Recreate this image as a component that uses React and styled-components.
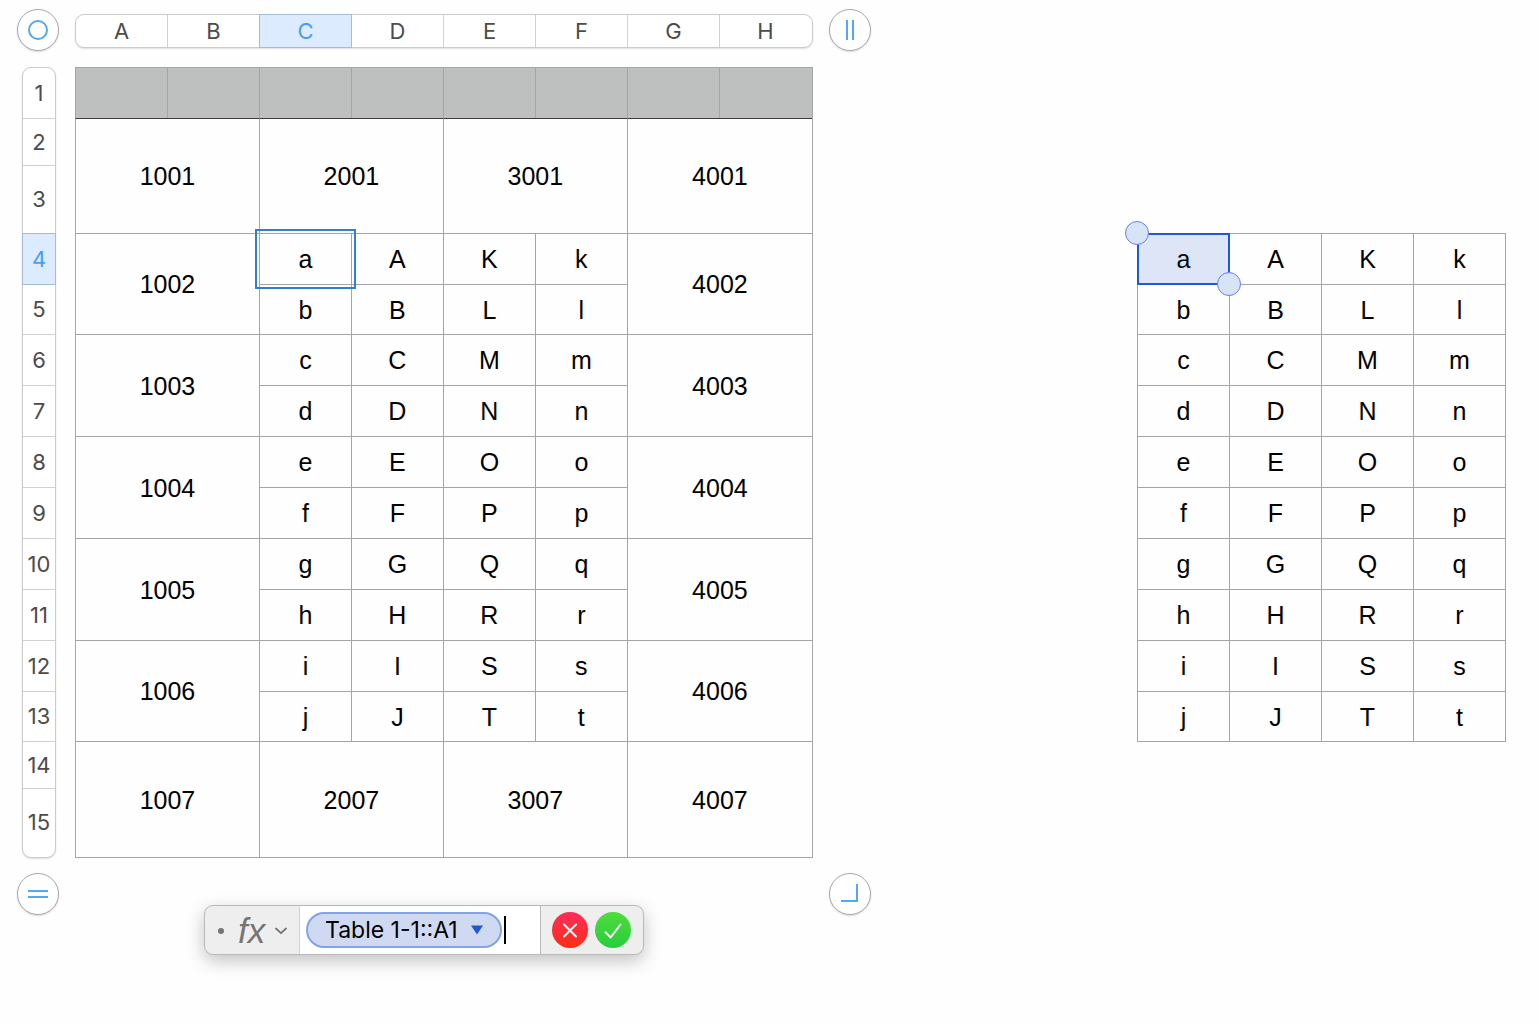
import React from 'react';
import styled, { createGlobalStyle, css } from 'styled-components';

const GlobalStyle = createGlobalStyle`
    * {
        box-sizing: border-box;
    }

    body {
        margin: 0;
        background: #fefefe;
        font-family: Inter, 'Liberation Sans', sans-serif;
    }

    button,
    input {
        margin: 0;
        padding: 0;
        border: 0;
        background: none;
        font: inherit;
        color: inherit;
    }
`;

const Page = styled.main`
    display: flex;
    justify-content: space-between;
    align-items: flex-start;
    gap: 32px;
    min-height: 100vh;
    padding: 9px 32px 64px 17px;
`;

const Sheet = styled.section`
    display: grid;
    flex: 0 1 854px;
    min-width: 0;
    grid-template-columns: 42px minmax(0, 1fr) 42px;
    grid-template-rows: 43px auto auto;
    gap: 15px 16px;
    align-items: start;
`;

const SideTable = styled.section`
    flex: 0 1 369px;
    min-width: 0;
    margin-top: 224px;
`;

const RoundButton = styled.button`
    display: flex;
    align-items: center;
    justify-content: center;
    width: 42px;
    height: 42px;
    border: 1px solid #a9a9a9;
    border-radius: 50%;
    background: white;
    box-shadow: 0 1px 2px rgba(0, 0, 0, 0.15);
    grid-column: ${({ $column }) => $column};
`;

const headerBar = css`
    display: flex;
    border: 1px solid #cbcbcb;
    background: white;
    box-shadow: 0 1px 2px rgba(0, 0, 0, 0.12);
    border-radius: 9px;
`;

const ColumnBar = styled.div`
    ${headerBar}
    height: 34px;
    margin-top: 5px;
`;

const RowBar = styled.div`
    ${headerBar}
    flex-direction: column;
    justify-self: end;
    width: 34px;
    margin-right: 3px;
`;

const headerButton = css`
    position: relative;
    font-size: 22px;
    line-height: 32px;
    text-align: center;
    color: ${({ $active }) => ($active ? '#4a9cf5' : '#4c4c4c')};
    background: ${({ $active }) => ($active ? '#dcebfd' : 'transparent')};

    &::after {
        content: ${({ $active }) => ($active ? "''" : 'none')};
        position: absolute;
        inset: -1px;
        border: 1px solid #a3bbd9;
    }
`;

const ColumnButton = styled.button`
    ${headerButton}
    flex: 1;
    border-right: 1px solid #d2d2d2;

    &:last-child {
        border-right-color: transparent;
    }
`;

const RowButton = styled.button`
    ${headerButton}
    height: ${({ $height }) => $height}px;
    padding-bottom: 1px;
    border-bottom: 1px solid #d2d2d2;

    &:last-child {
        border-bottom-color: transparent;
    }
`;

const Grid = styled.table`
    width: 100%;
    table-layout: fixed;
    border-collapse: separate;
    border-spacing: 0;
    border-right: 1px solid #a5a5a5;
    border-bottom: 1px solid #a5a5a5;
    font-family: 'Liberation Sans', Arial, sans-serif;
    font-size: 25px;
    line-height: 28px;
    color: black;
`;

// the last column takes what is left over
const Column = styled.col`
    width: 12.48%;

    &:last-child {
        width: auto;
    }
`;

const Row = styled.tr`
    height: ${({ $height }) => $height}px;
`;

const Cell = styled.td`
    position: relative;
    padding: 0;
    border-top: 1px solid ${({ $underHeader }) => ($underHeader ? '#3c3c3c' : '#a5a5a5')};
    border-left: 1px solid #a5a5a5;
    text-align: center;
    vertical-align: middle;
`;

const HeadCell = styled.th`
    padding: 0;
    border-top: 1px solid #a5a5a5;
    border-left: 1px solid #a5a5a5;
    background: #bdc0bf;
`;

const EditFrame = styled.span`
    position: absolute;
    inset: -5px;
    border: 2px solid #3180cf;
    z-index: 1;
    pointer-events: none;
`;

const RangeFrame = styled.span`
    position: absolute;
    inset: -1px;
    border: 2px solid #1f5ad6;
    background: rgba(31, 84, 204, 0.15);
    z-index: 1;
`;

const Handle = styled.span`
    position: absolute;
    width: 24px;
    height: 24px;
    border: 1px solid #6c7df0;
    border-radius: 50%;
    background: #d7e3f6;
    ${({ $end }) => ($end ? 'right: -13px; bottom: -13px;' : 'left: -14px; top: -14px;')}
`;

const FormulaBar = styled.form`
    display: flex;
    grid-column: 2;
    width: 440px;
    max-width: 100%;
    height: 50px;
    margin: 32px 0 0 129px;
    border: 1px solid #b9b9b9;
    border-radius: 9px;
    background: #eeeeee;
    box-shadow: 0 6px 18px rgba(0, 0, 0, 0.24);
`;

const FunctionButton = styled.button`
    display: flex;
    align-items: center;
    gap: 10px;
    width: 95px;
    padding-top: 2px;
    padding-left: 13px;
    color: #757575;
    border-right: 1px solid #d2d2d2;
`;

const FunctionLabel = styled.span`
    padding-left: 4px;
    font-family: 'Liberation Sans', Arial, sans-serif;
    font-size: 35px;
    font-style: italic;
    line-height: 46px;
`;

const FormulaField = styled.div`
    display: flex;
    flex: 1;
    align-items: center;
    min-width: 0;
    padding-left: 6px;
    background: white;
`;

const Token = styled.button`
    display: flex;
    flex: none;
    align-items: center;
    justify-content: space-between;
    width: 196px;
    height: 36px;
    padding: 0 16px 0 17px;
    border: 2px solid #83a3e5;
    border-radius: 18px;
    background: #cfdaf2;
    font-size: 23px;
    color: black;
    white-space: nowrap;
`;

const Caret = styled.span`
    flex: none;
    width: 2px;
    height: 28px;
    margin-left: 2px;
    background: black;
`;

const FormulaInput = styled.input`
    flex: 1;
    min-width: 0;
    font-size: 23px;
    outline: none;
`;

const Actions = styled.div`
    display: flex;
    align-items: center;
    gap: 7px;
    padding: 0 12px 0 11px;
    border-left: 1px solid #b9b9b9;
`;

const ActionButton = styled.button`
    width: 36px;
    height: 36px;
    border-radius: 50%;
    background: linear-gradient(${({ $from, $to }) => `${$from}, ${$to}`});

    svg {
        display: block;
    }
`;

const columns = ['A', 'B', 'C', 'D', 'E', 'F', 'G', 'H'];
const rowHeights = [51, 47, 68, 51, 50, 51, 51, 51, 51, 51, 51, 51, 50, 47, 69];

const letters = [
    ['a', 'A', 'K', 'k'],
    ['b', 'B', 'L', 'l'],
    ['c', 'C', 'M', 'm'],
    ['d', 'D', 'N', 'n'],
    ['e', 'E', 'O', 'o'],
    ['f', 'F', 'P', 'p'],
    ['g', 'G', 'Q', 'q'],
    ['h', 'H', 'R', 'r'],
    ['i', 'I', 'S', 's'],
    ['j', 'J', 'T', 't'],
];

function Icon({ children, size = 24, color = '#50a9f5' }) {
    return (
        <svg width={size} height={size} viewBox={`0 0 ${size} ${size}`} fill='none' stroke={color} strokeWidth='2' aria-hidden='true'>
            {children}
        </svg>
    );
}

function MergedRows({ values, first, underHeader }) {
    return (
        <>
            <Row $height={rowHeights[first]}>
                {values.map((value) => (
                    <Cell key={value} colSpan={2} rowSpan={2} $underHeader={underHeader}>{value}</Cell>
                ))}
            </Row>
            <Row $height={rowHeights[first + 1]} />
        </>
    );
}

function MainTable() {
    return (
        <Grid aria-label='Table 1'>
            <colgroup>
                {columns.map((name) => <Column key={name} />)}
            </colgroup>
            <thead>
                <Row $height={rowHeights[0]}>
                    {columns.map((name) => <HeadCell key={name} />)}
                </Row>
            </thead>
            <tbody>
                <MergedRows values={[1001, 2001, 3001, 4001]} first={1} underHeader />
                {letters.map((row, i) => {
                    const side = 2 + i / 2;
                    return (
                        <Row key={row[0]} $height={rowHeights[i + 3]}>
                            {i % 2 === 0 && <Cell colSpan={2} rowSpan={2}>{1000 + side}</Cell>}
                            {row.map((letter) => (
                                <Cell key={letter}>
                                    {letter}
                                    {letter === 'a' && <EditFrame />}
                                </Cell>
                            ))}
                            {i % 2 === 0 && <Cell colSpan={2} rowSpan={2}>{4000 + side}</Cell>}
                        </Row>
                    );
                })}
                <MergedRows values={[1007, 2007, 3007, 4007]} first={13} />
            </tbody>
        </Grid>
    );
}

function LetterTable() {
    return (
        <Grid aria-label='Table 1-1'>
            <tbody>
                {letters.map((row, i) => (
                    <Row key={row[0]} $height={rowHeights[i + 3]}>
                        {row.map((letter) => (
                            <Cell key={letter}>
                                {letter}
                                {letter === 'a' && (
                                    <RangeFrame>
                                        <Handle />
                                        <Handle $end />
                                    </RangeFrame>
                                )}
                            </Cell>
                        ))}
                    </Row>
                ))}
            </tbody>
        </Grid>
    );
}

function FormulaEditor() {
    return (
        <FormulaBar onSubmit={(e) => e.preventDefault()}>
            <FunctionButton type='button' aria-label='Functions'>
                <svg width='6' height='6' viewBox='0 0 6 6' aria-hidden='true'>
                    <circle cx='3' cy='3' r='3' fill='#757575' />
                </svg>
                <FunctionLabel>fx</FunctionLabel>
                <svg width='12' height='8' viewBox='0 0 12 8' fill='none' stroke='#757575' strokeWidth='1.8' aria-hidden='true'>
                    <path d='M1 1.5 6 6.2 11 1.5' strokeLinecap='round' strokeLinejoin='round' />
                </svg>
            </FunctionButton>
            <FormulaField>
                <Token type='button' aria-haspopup='menu'>
                    Table 1-1::A1
                    <svg width='14' height='10' viewBox='0 0 14 10' aria-hidden='true'>
                        <path d='M1 .5h12L7 9.5z' fill='#1f58cf' />
                    </svg>
                </Token>
                <Caret />
                <FormulaInput aria-label='Formula' />
            </FormulaField>
            <Actions>
                <ActionButton type='button' aria-label='Cancel' $from='#ff2d5a' $to='#fb2d14'>
                    <Icon size={36} color='white'>
                        <path d='M12 12.5 24 24.5M24 12.5 12 24.5' strokeLinecap='round' />
                    </Icon>
                </ActionButton>
                <ActionButton type='submit' aria-label='Accept' $from='#4fdc3c' $to='#27cd3f'>
                    <Icon size={36} color='white'>
                        <path d='M10.5 20.2 15.6 25.5 25.5 12.5' strokeLinecap='round' strokeLinejoin='round' />
                    </Icon>
                </ActionButton>
            </Actions>
        </FormulaBar>
    );
}

export default function App() {
    return (
        <Page>
            <GlobalStyle />
            <Sheet>
                <RoundButton $column={1} aria-label='Select table'>
                    <Icon><circle cx='12' cy='12' r='9' /></Icon>
                </RoundButton>
                <ColumnBar>
                    {columns.map((name) => (
                        <ColumnButton key={name} $active={name === 'C'}>{name}</ColumnButton>
                    ))}
                </ColumnBar>
                <RoundButton $column={3} aria-label='Add column'>
                    <Icon><path d='M9 2v20M15 2v20' /></Icon>
                </RoundButton>

                <RowBar>
                    {rowHeights.map((height, i) => (
                        <RowButton
                            key={i}
                            $height={i === rowHeights.length - 1 ? height - 1 : height}
                            $active={i === 3}
                        >
                            {i + 1}
                        </RowButton>
                    ))}
                </RowBar>
                <MainTable />
                <span />

                <RoundButton $column={1} aria-label='Add row'>
                    <Icon><path d='M2 9h20M2 15h20' /></Icon>
                </RoundButton>
                <FormulaEditor />
                <RoundButton $column={3} aria-label='Add row and column'>
                    <Icon><path d='M3 19h16V2' /></Icon>
                </RoundButton>
            </Sheet>
            <SideTable>
                <LetterTable />
            </SideTable>
        </Page>
    );
}
